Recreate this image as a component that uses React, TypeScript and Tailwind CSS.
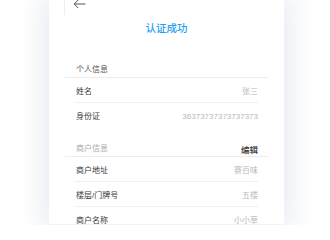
import React from "react";

const font = { fontFamily: '"Liberation Sans","Noto Sans CJK SC",sans-serif' };

function Row({ label, value, last }: { label: string; value: string; last?: boolean }) {
  return (
    <div
      className={`mx-[10px] h-[25px] flex items-center justify-between pl-[1px] pt-[3px] ${
        last ? "" : "border-b border-[#efefef]"
      }`}
    >
      <span className="text-[8px] text-[#3a3a3a] leading-none">{label}</span>
      <span className="text-[8px] text-[#b8b8b8] leading-none">{value}</span>
    </div>
  );
}

export default function App() {
  return (
    <div className="w-[330px] h-[225px] bg-white overflow-hidden" style={font}>
      <div className="ml-[49px] w-[235px] h-[225px] bg-white shadow-[0_0_26px_6px_rgba(225,230,240,0.85)]">
        <div className="h-[16px] ml-[15px] border-l border-[#eeeeee] pl-[8px]">
          <svg width="13" height="10" viewBox="0 0 13 10" className="block -mt-[1px]">
            <path d="M12.5 5H1.2M5.2 1L1.2 5l4 4" fill="none" stroke="#555" strokeWidth="1" />
          </svg>
        </div>
        <div className="mt-[6px] h-[14px] leading-[14px] text-center text-[10.5px] font-medium text-[#2a9ff0]">
          认证成功
        </div>
        <div className="mx-[16px] mt-[27px]">
          <div className="h-[16px] border-b border-[#ececec] px-[11px] pt-[1px] flex items-center">
            <span className="text-[8px] leading-none text-[#555]">个人信息</span>
          </div>
          <Row label="姓名" value="张三" />
          <Row label="身份证" value="36373737373737373" last />
          <div className="mt-[14px] h-[15px] border-b border-[#ececec] pl-[11px] pr-[10px] flex items-center justify-between">
            <span className="text-[8px] leading-none text-[#aaaaaa]">商户信息</span>
            <span className="text-[8.5px] leading-none text-[#333] font-medium mt-[3px]">编辑</span>
          </div>
          <Row label="商户地址" value="赛百味" />
          <Row label="楼层/门牌号" value="五楼" />
          <Row label="商户名称" value="小小草" last />
        </div>
      </div>
    </div>
  );
}
